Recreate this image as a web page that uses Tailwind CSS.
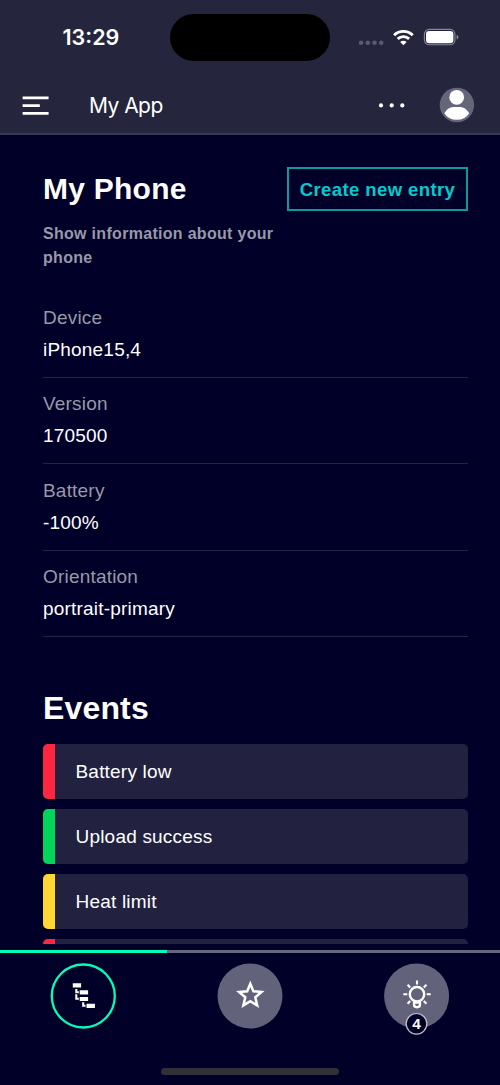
<!DOCTYPE html>
<html lang="en">
<head>
<meta charset="utf-8">
<title>My App</title>
<script src="https://cdn.jsdelivr.net/npm/@tailwindcss/browser@4"></script>
</head>
<body class="bg-[#000028] text-white">
<div class="flex h-[1085px] w-[500px] flex-col overflow-hidden font-['Liberation_Sans',Arial,sans-serif]">
  <header class="flex h-[135px] shrink-0 flex-col border-b-2 border-[#39394f] bg-[#25253d] font-[Inter,sans-serif]">
    <div class="flex h-[75px] items-center">
      <div class="w-[170px] pt-px pl-[62.5px] text-[21.5px] leading-6 font-semibold">13:29</div>
      <div class="mt-0.5 h-[47px] w-[160px] rounded-full bg-black"></div>
      <svg class="ml-[28px] h-6 w-[102px]" viewBox="358 25 102 24">
        <g fill="#5b5b6d"><circle cx="361.1" cy="42.8" r="2.3"/><circle cx="367.8" cy="42.8" r="2.3"/><circle cx="374.5" cy="42.8" r="2.3"/><circle cx="381.2" cy="42.8" r="2.3"/></g>
        <g fill="none" stroke="#fff" stroke-width="2.9"><path d="M394.1 35.2a13.3 13.3 0 0 1 18.6 0"/><path d="M397.7 38.9a8.2 8.2 0 0 1 11.4 0"/></g>
        <path d="M403.4 45.2l-3.2-3.2a4.6 4.6 0 0 1 6.4 0z" fill="#fff"/>
        <rect x="424.4" y="29.4" width="30.6" height="15.4" rx="4.8" fill="none" stroke="#85859a" stroke-width="1.1"/>
        <rect x="426" y="31" width="27.4" height="12.2" rx="3.3" fill="#fff"/>
        <path d="M456.6 34.8c2.4.8 2.4 4 0 4.8z" fill="#85859a"/>
      </svg>
    </div>
    <div class="flex h-[60px] items-center pt-1 pl-[22px]">
      <svg class="h-5 w-[27px]" viewBox="0 0 27 20" fill="#fff"><path d="M.6 1.6h26v2.7H.6zM.6 9.3h17.2V12H.6zM.6 17h26v2.7H.6z"/></svg>
      <div class="ml-10 w-[289px] pt-0.5 text-[21px] leading-6 tracking-[-0.55px]">My App</div>
      <svg class="h-5 w-[28px]" viewBox="378 95 28 20" fill="#fff"><circle cx="381" cy="105.4" r="2.1"/><circle cx="391.7" cy="105.4" r="2.1"/><circle cx="402.3" cy="105.4" r="2.1"/></svg>
      <svg class="ml-[33px] h-9 w-9" viewBox="439 87 36 36"><circle cx="456.9" cy="105" r="17.2" fill="#66667b"/><circle cx="456.7" cy="97.3" r="7.4" fill="#fff"/><path d="M444.3 113.2q4-6.3 8.7-6.3h7.500q4.700 0 8.700 6.300q-4 6.600-12.400 6.600t-12.500-6.600z" fill="#fff"/></svg>
    </div>
  </header>

  <main class="h-[809px] shrink-0 overflow-hidden pr-8 pl-[43px]">
    <section class="flex h-[167px] justify-between">
      <div class="w-[240px] pt-[36px]">
        <h1 class="text-[30px] leading-9 font-bold whitespace-nowrap tracking-[0.25px]">My Phone</h1>
        <p class="mt-[15px] text-[16px] leading-6 font-bold tracking-[0.3px] text-[#9999a9]">Show information about your phone</p>
      </div>
      <button class="mt-8 h-[44px] w-[181px] shrink-0 border-2 border-[#099a9d] pt-px text-[18.5px] font-bold whitespace-nowrap tracking-[0.4px] text-[#00cccc]">Create new entry</button>
    </section>
    <dl class="text-[19px] leading-8 tracking-[0.2px]">
      <div class="h-[76px] border-b border-[#24244a]"><dt class="text-[#9999a9]">Device</dt><dd>iPhone15,4</dd></div>
      <div class="h-[86.4px] border-b border-[#24244a] pt-[10.4px]"><dt class="text-[#9999a9]">Version</dt><dd>170500</dd></div>
      <div class="h-[86.6px] border-b border-[#24244a] pt-[10.5px]"><dt class="text-[#9999a9]">Battery</dt><dd>-100%</dd></div>
      <div class="h-[86.4px] border-b border-[#24244a] pt-[10.4px]"><dt class="text-[#9999a9]">Orientation</dt><dd>portrait-primary</dd></div>
    </dl>
    <h2 class="mt-[51px] h-[56px] text-[32px] leading-10 font-bold tracking-[0.15px]">Events</h2>
    <ul class="flex flex-col gap-[10.5px] text-[19px] tracking-[0.2px]">
      <li class="flex h-[54.5px] shrink-0 items-center overflow-hidden rounded-[5px] bg-[#222240]"><span class="h-full w-[11.5px] bg-[#ff2640]"></span><span class="ml-[21px] pt-px">Battery low</span></li>
      <li class="flex h-[54.5px] shrink-0 items-center overflow-hidden rounded-[5px] bg-[#222240]"><span class="h-full w-[11.5px] bg-[#01d65a]"></span><span class="ml-[21px] pt-px">Upload success</span></li>
      <li class="flex h-[54.5px] shrink-0 items-center overflow-hidden rounded-[5px] bg-[#222240]"><span class="h-full w-[11.5px] bg-[#ffd732]"></span><span class="ml-[21px] pt-px">Heat limit</span></li>
      <li class="flex h-[54.5px] shrink-0 items-center overflow-hidden rounded-[5px] bg-[#222240]"><span class="h-full w-[11.5px] bg-[#ff2640]"></span></li>
    </ul>
  </main>

  <nav class="mt-[6px] flex h-[135px] shrink-0 flex-col">
    <div class="h-[2.5px] bg-[#66667e]"><div class="h-full w-[167px] bg-[#00ffb9]"></div></div>
    <svg class="h-[84px] w-[500px]" viewBox="0 953 500 84">
      <circle cx="83.3" cy="996" r="31.5" fill="none" stroke="#00ffb9" stroke-width="2.3"/>
      <path fill="#fff" d="M72.8 983.3h8.3v4.2h-8.3zM79.7 990.2h8.4v4.2h-8.4zM79.7 996.9h8.4v4.2h-8.4zM86.5 1003.7h8.4v4.2h-8.4z"/>
      <path fill="none" stroke="#fff" stroke-width="2.1" d="M76.3 989v3.2h2.5M76.3 994.3v4.4h2.5M83.2 1002.3v3.500h2.300"/>
      <circle cx="250" cy="996" r="32.5" fill="#62627b"/>
      <path fill="none" stroke="#fff" stroke-width="2.5" d="M250.300 983.800l3.100 7.500 8.100.7-6.200 5.300 1.900 8.100-6.900-4.300-6.900 4.300 1.900-8.100-6.200-5.300 8.100-.7z"/>
      <circle cx="416.6" cy="996" r="32.5" fill="#62627b"/>
      <g fill="none" stroke="#fff" stroke-width="2.4"><circle cx="417" cy="994.2" r="7.2"/><path d="M414.1 1000.8v4.300q0 2.100 2.900 2.100t2.900-2.100v-4.300M414 1002.500h6"/><path stroke-width="2.1" d="M417 984.600v-4M410.200 987.500l-2.600-2.700M423.800 987.500l2.600-2.700M407.300 994.300h-4M426.700 994.300h4M410.200 1001l-2.600 2.700M423.800 1001l2.600 2.700"/></g>
      <circle cx="416.5" cy="1023.8" r="10.3" fill="#000028" stroke="#c2c2c8" stroke-width="1.2"/>
      <text x="416.5" y="1029.2" text-anchor="middle" fill="#fff" font-family="Liberation Sans" font-size="15.5" font-weight="700">4</text>
    </svg>
    <div class="mt-[31.5px] h-[6.5px] w-[178px] self-center rounded-full bg-[#303038]"></div>
  </nav>
</div>
</body>
</html>
